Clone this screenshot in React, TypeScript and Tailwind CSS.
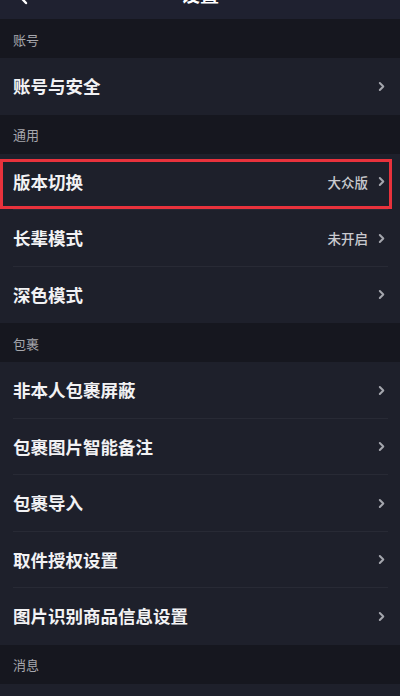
const font = { fontFamily: '"Noto Sans CJK SC", "Noto Sans", sans-serif' };

type Row = { label: string; value?: string; highlight?: boolean };
type Section = { title: string; rows: Row[] };

const sections: Section[] = [
  { title: "账号", rows: [{ label: "账号与安全" }] },
  {
    title: "通用",
    rows: [
      { label: "版本切换", value: "大众版", highlight: true },
      { label: "长辈模式", value: "未开启" },
      { label: "深色模式" },
    ],
  },
  {
    title: "包裹",
    rows: [
      { label: "非本人包裹屏蔽" },
      { label: "包裹图片智能备注" },
      { label: "包裹导入" },
      { label: "取件授权设置" },
      { label: "图片识别商品信息设置" },
    ],
  },
  { title: "消息", rows: [{ label: "消息通知" }] },
];

function Chevron() {
  return (
    <svg width="7" height="11" viewBox="0 0 7 11" className="shrink-0">
      <path d="M1.8 2 L5.3 5.5 L1.8 9" fill="none" stroke="#a4a6ad" strokeWidth="2" strokeLinecap="round" strokeLinejoin="round" />
    </svg>
  );
}

function SettingRow({ row, last }: { row: Row; last: boolean }) {
  return (
    <div className="relative h-[56.5px] bg-[#1e202b]">
      <div className="flex h-full items-center pl-[13px] pr-[15px]">
        <span className="flex-1 text-[17.5px] font-bold text-[#f2f2f4]">{row.label}</span>
        {row.value && <span className="mr-[10px] text-[13.5px] font-medium text-[#c9cacf]">{row.value}</span>}
        <Chevron />
      </div>
      {!last && <div className="absolute bottom-0 left-[13px] right-[12px] h-px bg-[#282a35]" />}
      {row.highlight && (
        <div className="pointer-events-none absolute left-0 right-[8px] top-[5px] bottom-[1px] border-[3px] border-[#e8323c]" />
      )}
    </div>
  );
}

export default function App() {
  return (
    <div className="h-[696px] w-[400px] overflow-hidden bg-[#1e202b]" style={font}>
      {/* Top bar, mostly scrolled out of view */}
      <div className="relative h-[19px] overflow-hidden bg-[#1f2130]">
        <div className="-mt-[20px] flex h-[28px] items-center justify-center">
          <svg width="12" height="20" viewBox="0 0 12 20" className="absolute left-[16px] top-[-14px]">
            <path d="M10 2 L3 9.5 L10 17" fill="none" stroke="#ffffff" strokeWidth="2.4" strokeLinecap="round" strokeLinejoin="round" />
          </svg>
          <span className="text-[19px] font-bold text-white">设置</span>
        </div>
      </div>

      {sections.map((s) => (
        <div key={s.title}>
          <div className="flex h-[39px] items-center bg-[#16171f] pl-[13px] pt-[2px] text-[13px] text-[#a7a8ae]">
            {s.title}
          </div>
          {s.rows.map((r, i) => (
            <SettingRow key={r.label} row={r} last={i === s.rows.length - 1} />
          ))}
        </div>
      ))}
    </div>
  );
}
